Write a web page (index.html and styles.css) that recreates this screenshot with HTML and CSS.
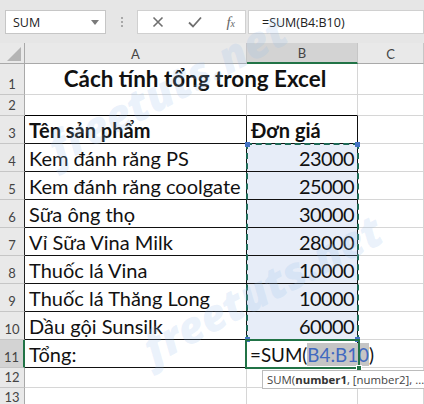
FILE: index.html
```html
<!DOCTYPE html>
<html>
<head>
<meta charset="utf-8">
<link rel="stylesheet" href="styles.css">
</head>
<body>
<div class="app">
  <div class="fbar">
    <div class="namebox"><span>SUM</span>
      <svg class="dd" width="8" height="5" viewBox="0 0 8 5"><path d="M0 0h8L4 5z" fill="#7a7a7a"/></svg>
    </div>
    <div class="sep"><i></i><i></i><i></i></div>
    <div class="fbtns">
      <svg width="12" height="12" viewBox="0 0 12 12"><path d="M1.5 1.5l9 9M10.5 1.5l-9 9" stroke="#6f6f6f" stroke-width="1.6"/></svg>
      <svg width="14" height="12" viewBox="0 0 14 12"><path d="M1 6.5l4 4L13 1.5" stroke="#6f6f6f" stroke-width="1.8" fill="none"/></svg>
      <span class="fx">f<small>x</small></span>
    </div>
    <div class="finput">=SUM(B4:B10)</div>
  </div>
  <div class="sheet">
    <div class="c corner"><svg width="14" height="14" viewBox="0 0 14 14"><path d="M14 0V14H0z" fill="#b4b4b4"/></svg></div>
    <div class="c ch">A</div>
    <div class="c ch chsel">B</div>
    <div class="c ch">C</div>

    <div class="c rh">1</div>
    <div class="c title">Cách tính tổng trong Excel</div>
    <div class="c"></div>

    <div class="c rh">2</div>
    <div class="c bb"></div>
    <div class="c bb"></div>
    <div class="c"></div>

    <div class="c rh rk">3</div>
    <div class="c a k b">Tên sản phẩm</div>
    <div class="c k b">Đơn giá</div>
    <div class="c"></div>

    <div class="c rh rk">4</div>
    <div class="c a k">Kem đánh răng PS</div>
    <div class="c bcol k num">23000</div>
    <div class="c"></div>

    <div class="c rh rk">5</div>
    <div class="c a k">Kem đánh răng coolgate</div>
    <div class="c bcol k num">25000</div>
    <div class="c"></div>

    <div class="c rh rk">6</div>
    <div class="c a k">Sữa ông thọ</div>
    <div class="c bcol k num">30000</div>
    <div class="c"></div>

    <div class="c rh rk">7</div>
    <div class="c a k">Vỉ Sữa Vina Milk</div>
    <div class="c bcol k num">28000</div>
    <div class="c"></div>

    <div class="c rh rk">8</div>
    <div class="c a k">Thuốc lá Vina</div>
    <div class="c bcol k num">10000</div>
    <div class="c"></div>

    <div class="c rh rk">9</div>
    <div class="c a k">Thuốc lá Thăng Long</div>
    <div class="c bcol k num">10000</div>
    <div class="c"></div>

    <div class="c rh rk">10</div>
    <div class="c a k">Dầu gội Sunsilk</div>
    <div class="c bcol k num">60000</div>
    <div class="c"></div>

    <div class="c rh rsel">11</div>
    <div class="c a k">Tổng:</div>
    <div class="c k edit">=SUM(<span class="ref">B4:B10</span>)</div>
    <div class="c"></div>

    <div class="c rh">12</div>
    <div class="c"></div>
    <div class="c"></div>
    <div class="c"></div>

    <div class="c rh">13</div>
    <div class="c"></div>
    <div class="c"></div>
    <div class="c"></div>

    <div class="range"><i class="h tl"></i><i class="h tr"></i><i class="h bl"></i><i class="h br"></i></div>
    <div class="active"><i class="fill"></i></div>
    <div class="tip">SUM(<b>number1</b>, [number2], ...</div>
    <div class="wm wm1">freetuts.net</div>
    <div class="wm wm2">freetuts.net</div>
  </div>
</div>
</body>
</html>
```
FILE: styles.css
```css
* { box-sizing: border-box; }
html, body { margin: 0; padding: 0; background: #fff; }
.app {
  width: 424px; height: 404px; overflow: hidden; position: relative;
  font-family: Lato, "Open Sans", sans-serif;
}
.fbar {
  height: 43px; background: #e6e6e6;
  display: flex; align-items: flex-start; padding-top: 10px;
  font-family: "Open Sans", "Noto Sans", sans-serif; font-size: 12.5px; color: #222;
}
.namebox {
  margin-left: 5px; width: 101px; height: 24px; background: #fff;
  border: 1px solid #c6c6c6; display: flex; align-items: center;
  justify-content: space-between; padding: 0 6px 0 7px;
}
.sep { width: 31px; height: 24px; display: flex; flex-direction: column; align-items: center; justify-content: center; gap: 2px; }
.sep i { width: 2px; height: 2px; background: #a8a8a8; display: block; }
.fbtns {
  width: 109px; height: 24px; background: #fff; border: 1px solid #d0d0d0;
  display: flex; align-items: center; justify-content: space-between; padding: 0 10px 0 14px;
}
.fx { font-family: "Liberation Serif", serif; font-style: italic; font-size: 15px; color: #666; }
.fx small { font-size: 10px; }
.finput {
  flex: 1; height: 24px; background: #fff; border: 1px solid #d0d0d0; margin-left: 2px;
  display: flex; align-items: center; padding-left: 13px;
}
.sheet {
  position: relative;
  display: grid;
  grid-template-columns: 25px 222px 111px 66px;
  grid-template-rows: 21px 31px 21px repeat(9, 28px) 20px 20px;
}
.c {
  border-right: 1px solid #d6d6d6; border-bottom: 1px solid #d6d6d6;
  font-size: 20px; color: #111; white-space: nowrap; overflow: visible;
  display: flex; align-items: flex-end; padding: 0 0 1px 4px;
}
.corner { background: #e9e9e9; border-right-color: #a9a9a9; border-bottom-color: #a9a9a9; align-items: flex-end; justify-content: flex-end; padding: 0 3px 2px 0; }
.ch {
  background: #e9e9e9; border-right-color: #c6c6c6; border-bottom-color: #a9a9a9;
  font-size: 13px; color: #444; justify-content: center; align-items: center; padding: 1px 0 0;
}
.chsel { background: #d3d3d3; border-bottom: 2px solid #217346; }
.rh {
  background: #e9e9e9; border-right-color: #a9a9a9; border-bottom-color: #c6c6c6;
  font-size: 13px; color: #444; justify-content: center; align-items: flex-end; padding: 0 0 2px;
}
.rsel { background: #d3d3d3; border-right: 2px solid #217346; }
.title { grid-column: 2 / 4; justify-content: center; font-weight: 700; font-size: 22.4px; padding: 0 0 2px 8px; }
.bb { border-bottom-color: #000; }
.k { border-bottom-color: #111; border-right-color: #111; }
.rk { border-right-color: #222; }
.b { font-weight: 700; }
.a { padding-left: 4px; }
.bcol { background: #e7edf8; }
.num { justify-content: flex-end; padding-right: 3px; letter-spacing: -0.6px; }
.edit { background: #fff; padding-left: 3px; font-size: 18.8px; }
.ref { color: #4169c0; background: #c5c5c5; }
.range {
  position: absolute; left: 246px; top: 100px; width: 113px; height: 198px;
  border: 2px dashed #1e6a57;
}
.h { position: absolute; width: 5px; height: 5px; background: #4472c4; display: block; }
.tl { left: -3px; top: -3px; }
.tr { right: -3px; top: -3px; }
.bl { left: -3px; bottom: -3px; }
.br { right: -3px; bottom: -3px; }
.active {
  position: absolute; left: 245px; top: 296px; width: 115px; height: 30px;
  border: 2px solid #217346;
}
.fill { position: absolute; right: -4px; bottom: -4px; width: 6px; height: 6px; background: #217346; border: 1px solid #fff; display: block; }
.tip {
  position: absolute; left: 262px; top: 327px; width: 162px; height: 19px;
  background: #fff; border: 1px solid #bcbcbc; border-right: none;
  font-family: "Open Sans", "Noto Sans", sans-serif; font-size: 11.4px; color: #444;
  padding: 0 0 0 4px; line-height: 17px; white-space: nowrap; overflow: hidden;
}
.tip b { color: #333; }
.wm {
  position: absolute; font-family: "Open Sans", sans-serif; font-weight: 800; font-style: italic;
  font-size: 44px; color: rgba(150, 190, 235, 0.2); transform: rotate(-28deg);
  pointer-events: none; white-space: nowrap;
}
.wm1 { left: 35px; top: 15px; }
.wm2 { left: 130px; top: 215px; }
```
